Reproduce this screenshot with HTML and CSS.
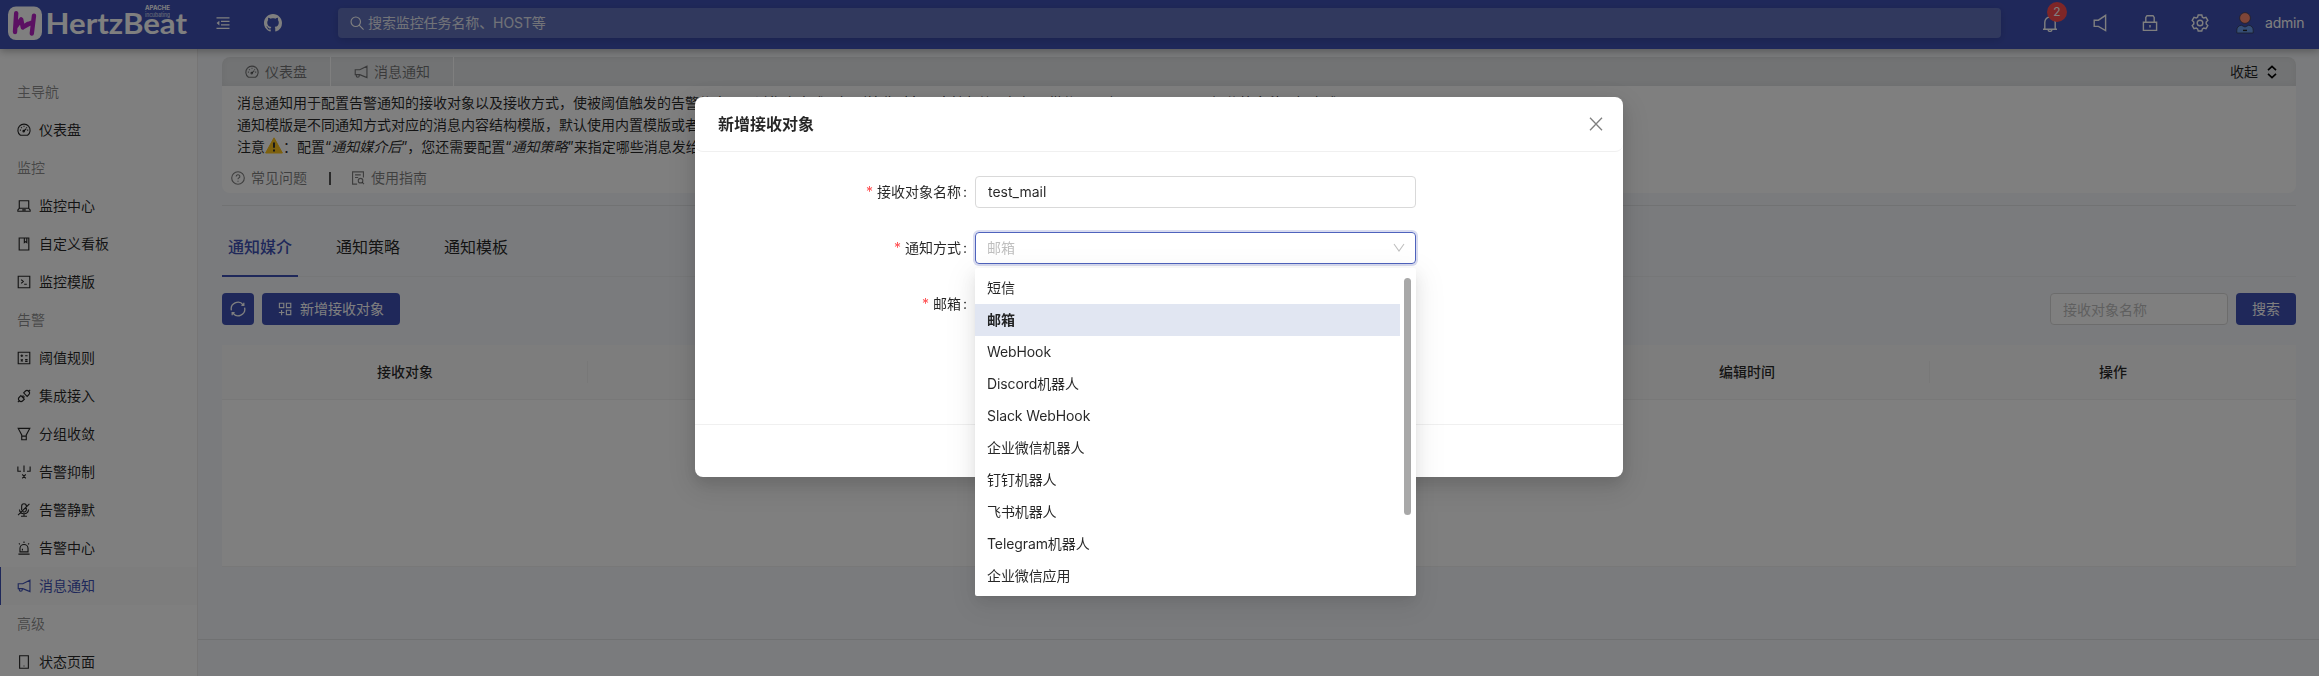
FILE: index.html
```html
<!DOCTYPE html>
<html lang="zh-CN">
<head>
    <meta charset="UTF-8">
    <meta name="viewport" content="width=device-width, initial-scale=1.0">
    <title>HertzBeat - 消息通知</title>
    <link rel="stylesheet" href="styles.css">
</head>
<body>
    <!-- shared icons -->
    <svg class="sprite" width="0" height="0">
        <symbol id="i-dashboard" viewBox="0 0 16 16"><path d="M3.9 14h8.2A7 7 0 1 0 3.9 14zM7.6 9.4l3-3M8 3.2v1.2M3.3 8.2h1.2M11.6 8.2h1.2M4.7 4.9l.8.8M11.4 4.9l-.7.7"/><circle cx="7.6" cy="9.3" r=".8"/></symbol>
        <symbol id="i-laptop" viewBox="0 0 16 16"><path d="M2.6 2h10.8v8.6H2.6zM2.6 10.6L1 12.4V14h14v-1.6l-1.6-1.8M6 12.5h4"/></symbol>
        <symbol id="i-book" viewBox="0 0 16 16"><path d="M2.5 1.2h11v13.6h-11zM8.4 1.4v5l1.4-1.1 1.4 1.1v-5"/></symbol>
        <symbol id="i-code" viewBox="0 0 16 16"><path d="M1.4 1.4h13.2v13.2H1.4zM4.8 5.2l2.4 2.2-2.4 2.2M8.2 10.6h3"/></symbol>
        <symbol id="i-calc" viewBox="0 0 16 16"><path d="M1.4 1.4h13.2v13.2H1.4zM4 5.4h3M5.5 3.9v3M9.3 5.4h2.8M4.4 9.5l2.2 2.4M6.6 9.5l-2.2 2.4M9.3 9.8h2.8M9.3 11.8h2.8"/></symbol>
        <symbol id="i-api" viewBox="0 0 16 16"><path d="M1 15l2.2-2.2M12.8 3.2L15 1M7.6 4.4l1.8-1.8a2.8 2.8 0 0 1 4 4l-1.8 1.8zM4.4 7.6L2.6 9.4a2.8 2.8 0 0 0 4 4l1.8-1.8zM5.8 9l1.6-1.6M7 10.2l1.6-1.6"/></symbol>
        <symbol id="i-funnel" viewBox="0 0 16 16"><path d="M1.4 1.6h13.2l-4 7.4v5.6H5.4V9zM5.4 10.4h5.2"/></symbol>
        <symbol id="i-inhibit" viewBox="0 0 16 16"><path d="M1 1.6v5.6h3.6M8 .6v7.4M15 1.6v5.6h-3.6M6 10.8l4 4.4M10 10.8l-4 4.4"/></symbol>
        <symbol id="i-mute" viewBox="0 0 16 16"><path d="M5.3 8.4V3.6a2.7 2.7 0 0 1 5.4 0v4a2.7 2.7 0 0 1-4.2 2.2M2.8 7.5A5.2 5.2 0 0 0 8 12.3a5.2 5.2 0 0 0 5.2-4.8M8 12.3v2.6M4.6 15.1h6.8M14.2 1L1.2 13.8"/></symbol>
        <symbol id="i-alert" viewBox="0 0 16 16"><path d="M3.4 12.4V8.6a4.6 4.6 0 0 1 9.2 0v3.8zM1.6 15h12.8M8 .6v1.8M2.2 2.8l1.1 1.1M13.8 2.8l-1.1 1.1M6.2 10.8V8.8"/></symbol>
        <symbol id="i-notify" viewBox="0 0 16 16"><path d="M14.8 1.4v13L6.6 11H1.4V5.4h5.2zM2.6 11.2v1a1.7 1.7 0 0 0 3.4 0v-1"/></symbol>
        <symbol id="i-mobile" viewBox="0 0 16 16"><path d="M3 .8h10v14.4H3zM7.5 12.6h1"/></symbol>
        <symbol id="i-question" viewBox="0 0 16 16"><circle cx="8" cy="8" r="7.2"/><path d="M5.9 6.3a2.1 2 0 1 1 2.9 1.8c-.6.3-.8.6-.8 1.4M8 11v1.2"/></symbol>
        <symbol id="i-guide" viewBox="0 0 16 16"><path d="M7 15H1.8V1h12.4v6.4M4.6 4.4h6.6M4.6 7.4h3.6M13 13l1.8 2"/><circle cx="10.9" cy="11" r="2.6"/></symbol>
        <symbol id="i-sync" viewBox="0 0 16 16"><path d="M1.4 9.4A6.7 6.7 0 0 1 13.2 3.8M14.6 6.6A6.7 6.7 0 0 1 2.8 12.2M13.8 1.8v2.6h-2.4M2.2 14.2v-2.6h2.4"/></symbol>
        <symbol id="i-appadd" viewBox="0 0 16 16"><path d="M1.6 1.4h5v5h-5zM9.6 1.4h5v5h-5zM9.6 9.4h5v5h-5zM1 12h6.2M4.1 9v6"/></symbol>
        <symbol id="i-search" viewBox="0 0 16 16"><circle cx="6.6" cy="6.6" r="5.4"/><path d="M10.5 10.5l5 5"/></symbol>
    </svg>

    <header class="header">
        <a class="logo" href="#">
            <svg width="190" height="49" viewBox="0 0 190 49">
                <rect x="8" y="6.5" width="34" height="33.5" rx="8" fill="#fff"/>
                <path d="M16.2 13.2L15 32M15.6 27l5.6-7.6 1.6 8 10-5.6M34 15.6L31.8 33.6M22.8 27.4l5.2-3.6" fill="none" stroke="#b621c4" stroke-width="4.4" stroke-linecap="round" stroke-linejoin="round"/>
                <text class="logo-name" x="45.5" y="34.4" textLength="141.5" lengthAdjust="spacingAndGlyphs">HertzBeat</text>
                <text class="logo-tag" x="145" y="9.8" textLength="25" lengthAdjust="spacingAndGlyphs">APACHE</text>
                <text class="logo-sub" x="145" y="16.8" textLength="25" lengthAdjust="spacingAndGlyphs">incubating</text>
            </svg>
        </a>
        <svg class="fold" width="14" height="14" viewBox="0 0 14 14"><path d="M.5 1.8h13M5 5.3h8.5M5 8.8h8.5M.5 12.4h13" fill="none" stroke="#fff" stroke-width="1.3"/><path d="M3.4 4.8v4.6L.6 7.1z" fill="#fff"/></svg>
        <svg class="github" width="18" height="18" viewBox="0 0 16 16"><path fill="#fff" d="M8 0C3.58 0 0 3.58 0 8c0 3.54 2.29 6.53 5.47 7.59.4.07.55-.17.55-.38 0-.19-.01-.82-.01-1.49-2.01.37-2.53-.49-2.69-.94-.09-.23-.48-.94-.82-1.13-.28-.15-.68-.52-.01-.53.63-.01 1.08.58 1.23.82.72 1.21 1.87.87 2.33.66.07-.52.28-.87.51-1.07-1.78-.2-3.64-.89-3.64-3.95 0-.87.31-1.59.82-2.15-.08-.2-.36-1.02.08-2.12 0 0 .67-.21 2.2.82.64-.18 1.32-.27 2-.27s1.36.09 2 .27c1.53-1.04 2.2-.82 2.2-.82.44 1.1.16 1.92.08 2.12.51.56.82 1.27.82 2.15 0 3.07-1.87 3.75-3.65 3.95.29.25.54.73.54 1.48 0 1.07-.01 1.93-.01 2.2 0 .21.15.46.55.38A8.01 8.01 0 0 0 16 8c0-4.42-3.58-8-8-8z"/></svg>
        <div class="header-search">
            <svg class="icon"><use href="#i-search"/></svg>
            <span>搜索监控任务名称、HOST等</span>
        </div>
        <div class="header-tools">
            <span class="tool bell">
                <svg width="18" height="18" viewBox="0 0 18 18"><path d="M2 15.2h14M3.8 15V8.2a5.2 5.2 0 0 1 10.4 0V15M9 1.2V3M7.2 16a1.8 1.4 0 0 0 3.6 0"/></svg>
                <span class="badge">2</span>
            </span>
            <span class="tool"><svg width="18" height="18" viewBox="0 0 18 18"><path d="M14.6 1.4v15.2L7.4 12.4H3.2V6.2h4.2z"/></svg></span>
            <span class="tool"><svg width="18" height="18" viewBox="0 0 18 18"><path d="M2.4 8.2h13.2v8.2H2.4zM4.8 8V3.4L6 1.7h6l1.2 1.7V8M9 11v2.4"/></svg></span>
            <span class="tool"><svg width="18" height="18" viewBox="0 0 18 18"><path d="M7.2 1h3.6l.6 2.2 1.4.8 2.2-.6L16.8 6.4 15.2 8v2l1.6 1.6-1.8 3.1-2.2-.6-1.4.8-.6 2.1H7.2l-.6-2.1-1.4-.8-2.2.6-1.8-3.1L2.8 10V8L1.2 6.4 3 3.4l2.2.6 1.4-.8z"/><circle cx="9" cy="9" r="2.8"/></svg></span>
            <span class="user">
                <svg class="avatar" width="18" height="22" viewBox="0 0 18 22"><circle cx="9" cy="6" r="5.4" fill="#ff8a70" stroke="#3c3c50" stroke-width=".8"/><path d="M.8 21v-2.6a5.4 5.4 0 0 1 4.4-5.2L9 15l3.8-1.8a5.4 5.4 0 0 1 4.4 5.2V21z" fill="#6a9cec" stroke="#333a52" stroke-width=".8"/><path d="M7 18.4h4" stroke="#222" stroke-width="1.4"/></svg>
                <span>admin</span>
            </span>
        </div>
    </header>

    <div class="layout">
        <nav class="sidebar">
            <div class="group">主导航</div>
            <a class="item"><svg class="icon"><use href="#i-dashboard"/></svg>仪表盘</a>
            <div class="group">监控</div>
            <a class="item"><svg class="icon"><use href="#i-laptop"/></svg>监控中心</a>
            <a class="item"><svg class="icon"><use href="#i-book"/></svg>自定义看板</a>
            <a class="item"><svg class="icon"><use href="#i-code"/></svg>监控模版</a>
            <div class="group">告警</div>
            <a class="item"><svg class="icon"><use href="#i-calc"/></svg>阈值规则</a>
            <a class="item"><svg class="icon"><use href="#i-api"/></svg>集成接入</a>
            <a class="item"><svg class="icon"><use href="#i-funnel"/></svg>分组收敛</a>
            <a class="item"><svg class="icon"><use href="#i-inhibit"/></svg>告警抑制</a>
            <a class="item"><svg class="icon"><use href="#i-mute"/></svg>告警静默</a>
            <a class="item"><svg class="icon"><use href="#i-alert"/></svg>告警中心</a>
            <a class="item active"><svg class="icon"><use href="#i-notify"/></svg>消息通知</a>
            <div class="group">高级</div>
            <a class="item"><svg class="icon"><use href="#i-mobile"/></svg>状态页面</a>
        </nav>

        <main class="content">
            <div class="page">
                <section class="help">
                    <div class="help-bar">
                        <a class="crumb"><svg class="icon"><use href="#i-dashboard"/></svg>仪表盘</a>
                        <a class="crumb"><svg class="icon"><use href="#i-notify"/></svg>消息通知</a>
                        <span class="collapse">收起
                            <svg width="10" height="14" viewBox="0 0 10 14"><path d="M1 5.2L5 1.4l4 3.8M1 8.8l4 3.8 4-3.8" fill="none" stroke="#000" stroke-width="1.6"/></svg>
                        </span>
                    </div>
                    <div class="help-text">
                        <p>消息通知用于配置告警通知的接收对象以及接收方式，使被阈值触发的告警信息，通过指定方式通知到接收对象。支持邮箱、钉钉、微信、飞书、WebHook，短信等多种通知方式。</p>
                        <p>通知模版是不同通知方式对应的消息内容结构模版，默认使用内置模版或者自定义模版。</p>
                        <p>注意<svg class="warn" width="18" height="17" viewBox="0 0 18 17"><path d="M9 .8L17.4 16H.6z" fill="#fcc21b" stroke="#fcc21b" stroke-linejoin="round"/><path d="M9 5.4v5.4M9 12.4v2" stroke="#333" stroke-width="2"/></svg>：配置“<i>通知媒介后</i>”，您还需要配置“<i>通知策略</i>”来指定哪些消息发给哪些接收对象。</p>
                    </div>
                    <div class="help-links">
                        <a><svg class="icon"><use href="#i-question"/></svg>常见问题</a>
                        <span class="sep"></span>
                        <a><svg class="icon"><use href="#i-guide"/></svg>使用指南</a>
                    </div>
                </section>

                <div class="divider"></div>

                <div class="tabs">
                    <a class="tab active">通知媒介</a>
                    <a class="tab">通知策略</a>
                    <a class="tab">通知模板</a>
                </div>

                <div class="toolbar">
                    <button class="btn refresh"><svg class="icon"><use href="#i-sync"/></svg></button>
                    <button class="btn"><svg class="icon"><use href="#i-appadd"/></svg>新增接收对象</button>
                    <input class="input filter" type="text" placeholder="接收对象名称">
                    <button class="btn search">搜索</button>
                </div>

                <table class="table">
                    <thead>
                        <tr>
                            <th class="col">接收对象</th>
                            <th></th>
                            <th class="col">编辑时间</th>
                            <th class="col">操作</th>
                        </tr>
                    </thead>
                    <tbody>
                        <tr><td colspan="4"></td></tr>
                    </tbody>
                </table>
            </div>
            <footer class="footer"></footer>
        </main>
    </div>

    <div class="mask">
        <div class="modal">
            <div class="modal-header">
                <span>新增接收对象</span>
                <svg width="14" height="14" viewBox="0 0 14 14"><path d="M1 .8l12 12.4M13 .8L1 13.2" fill="none" stroke="#7f7f7f" stroke-width="1.3"/></svg>
            </div>
            <div class="modal-body">
                <div class="row">
                    <label class="label">接收对象名称</label>
                    <input class="input" type="text" value="test_mail">
                </div>
                <div class="row">
                    <label class="label">通知方式</label>
                    <div class="select">
                        <span>邮箱</span>
                        <svg width="12" height="12" viewBox="0 0 12 12"><path d="M1 2l5 7 5-7" fill="none" stroke="#bfbfbf" stroke-width="1.1"/></svg>
                        <div class="dropdown">
                            <div class="option">短信</div>
                            <div class="option selected">邮箱</div>
                            <div class="option">WebHook</div>
                            <div class="option">Discord机器人</div>
                            <div class="option">Slack WebHook</div>
                            <div class="option">企业微信机器人</div>
                            <div class="option">钉钉机器人</div>
                            <div class="option">飞书机器人</div>
                            <div class="option">Telegram机器人</div>
                            <div class="option">企业微信应用</div>
                            <span class="thumb"></span>
                        </div>
                    </div>
                </div>
                <div class="row">
                    <label class="label">邮箱</label>
                </div>
            </div>
            <div class="modal-footer"></div>
        </div>
    </div>
</body>
</html>
```
FILE: styles.css
```css
* { box-sizing: border-box; }
body { margin: 0; height: 676px; overflow: hidden; background: #f5f7fa; color: rgba(0, 0, 0, 0.85); font: 14px/22px Inter, "Noto Sans CJK SC", sans-serif; }
p { margin: 0; }
input, button { font: inherit; }
.sprite { display: block; }
.icon { width: 14px; height: 14px; flex: none; fill: none; stroke: currentColor; stroke-width: 1.3; }

/* header */
.header { position: relative; z-index: 2; display: flex; align-items: center; width: 2320px; height: 49px; background: #3f51b5; color: #fff; box-shadow: 0 2px 8px rgba(0, 0, 0, 0.3); }
.logo { display: block; width: 217px; height: 49px; }
.logo text { fill: #fff; }
.logo-name { font: 700 29px "Lato", sans-serif; }
.logo-tag { font: 700 6px Inter, sans-serif; }
.logo-sub { font: 500 5.5px Inter, sans-serif; opacity: 0.7; }
.fold { margin: -3px 34px 0 -1px; }
.github { margin-top: -3px; }
.header-search { display: flex; align-items: center; gap: 4px; width: 1663px; height: 30px; margin: -3px 0 0 56px; padding: 0 12px; border-radius: 4px; background: #6373bd; box-shadow: 0 2px 8px rgba(0, 0, 0, 0.15); }
.header-search span { color: #e4e6f0; letter-spacing: -0.1px; }
.header-tools { display: flex; align-items: center; margin: -3px 0 0 24px; }
.tool { position: relative; display: flex; justify-content: center; width: 50px; }
.tool svg { fill: none; stroke: #fff; stroke-width: 1.4; }
.badge { position: absolute; left: 22px; top: -12px; width: 20px; height: 20px; border-radius: 10px; background: #ff4d4f; font-size: 12px; line-height: 20px; text-align: center; }
.user { display: flex; align-items: center; gap: 11px; margin-left: 11px; letter-spacing: -0.2px; }

/* sidebar */
.layout { display: flex; width: 2320px; height: 627px; }
.sidebar { width: 198px; padding-top: 24px; background: #fff; border-right: 1px solid #eceaea; }
.group { height: 38px; padding-left: 17px; line-height: 38px; color: rgba(0, 0, 0, 0.45); }
.item { display: flex; align-items: center; gap: 8px; height: 38px; padding-left: 17px; }
.item.active { padding-left: 16px; border-left: 1px solid #3f51b5; background: #fafafa; color: #3f51b5; }

/* page */
.content { flex: 1; }
.page { height: 590px; padding: 8px 24px 0; }
.footer { border-top: 1px solid #e0e2e5; }
.help { height: 136px; border-radius: 8px; background: #fff; overflow: hidden; }
.help-bar { display: flex; height: 29px; background: #e5e7e9; color: rgba(0, 0, 0, 0.5); box-shadow: inset 0 0 8px rgba(0, 0, 0, 0.06); }
.crumb { display: flex; align-items: center; gap: 6px; padding: 0 23px; border-right: 1px solid #fff; }
.collapse { display: flex; align-items: center; gap: 9px; margin-left: auto; padding-right: 19px; color: rgba(0, 0, 0, 0.85); }
.help-text { padding: 6px 0 0 15px; white-space: nowrap; }
.warn { vertical-align: -2px; }
.help-links { display: flex; align-items: center; margin: 9px 0 0 9px; color: rgba(0, 0, 0, 0.5); }
.help-links a { display: flex; align-items: center; gap: 6px; }
.sep { width: 2px; height: 13px; margin: 0 20px 0 22px; background: #555; }
.divider { height: 1px; margin-top: 12px; background: #e2e4e7; }
.tabs { display: flex; gap: 32px; height: 71px; border-bottom: 1px solid #eceef0; }
.tab { height: 71px; padding: 30px 6px 0; font-size: 16px; }
.tab.active { border-bottom: 2px solid #3f51b5; color: #3f51b5; font-weight: 500; }
.toolbar { display: flex; gap: 8px; margin-top: 16px; }
.btn { display: flex; align-items: center; gap: 8px; height: 32px; padding: 0 16px; border: none; border-radius: 4px; background: #3f51b5; color: #fff; }
.btn.refresh { padding: 0 8px; }
.btn.refresh .icon { width: 16px; height: 16px; }
.input { width: 441px; height: 32px; padding: 0 11px 0 12px; border: 1px solid #d9d9d9; border-radius: 4px; background: #fff; color: rgba(0, 0, 0, 0.85); }
.input::placeholder { color: #bfbfbf; }
.filter { width: 178px; margin-left: auto; }

.table { width: 100%; margin-top: 20px; table-layout: fixed; border-collapse: separate; border-spacing: 0; }
.table th { height: 55px; padding: 0; border-bottom: 1px solid #f0f0f0; background: linear-gradient(#f0f0f0, #f0f0f0) right center / 1px 22px no-repeat #fafafa; font-weight: 500; }
.table th:last-child { background: #fafafa; }
.table td { height: 167px; background: #fff; border-bottom: 1px solid #f0f0f0; }
.col { width: 366px; }

/* modal */
.mask { position: fixed; inset: 0; z-index: 10; background: rgba(0, 0, 0, 0.5); padding: 97px 0 0 695px; }
.modal { display: flex; flex-direction: column; width: 928px; height: 380px; border-radius: 8px; background: #fff; box-shadow: 0 6px 16px rgba(0, 0, 0, 0.12), 0 9px 28px 8px rgba(0, 0, 0, 0.08); }
.modal-header { display: flex; align-items: center; justify-content: space-between; height: 55px; padding: 0 20px 0 23px; border-bottom: 1px solid #f0f0f0; border-radius: 8px; font-size: 16px; font-weight: 600; }
.modal-body { flex: 1; padding-top: 24px; }
.modal-footer { height: 53px; border-top: 1px solid #f0f0f0; }
.row { display: flex; height: 32px; margin-bottom: 24px; line-height: 32px; }
.label { width: 280px; padding-right: 8px; text-align: right; }
.label::before { content: "*"; margin-right: 4px; color: #ff4d4f; }
.label::after { content: ":"; margin-left: 2px; }
.select { position: relative; display: flex; align-items: center; justify-content: space-between; width: 441px; height: 32px; padding: 0 10px 0 11px; border: 1px solid #4f63bd; border-radius: 4px; box-shadow: 0 0 0 2px rgba(63, 81, 181, 0.2); color: #bfbfbf; }
.dropdown { position: absolute; left: -1px; top: 35px; width: 441px; height: 328px; padding: 4px 0; border-radius: 2px; background: #fff; color: rgba(0, 0, 0, 0.85); box-shadow: 0 3px 6px -4px rgba(0, 0, 0, 0.12), 0 6px 16px rgba(0, 0, 0, 0.08), 0 9px 28px 8px rgba(0, 0, 0, 0.05); }
.option { width: 425px; height: 32px; padding-left: 12px; line-height: 32px; letter-spacing: -0.1px; }
.option.selected { background: #e1e6f2; font-weight: 600; }
.thumb { position: absolute; right: 5px; top: 10px; width: 7px; height: 237px; border-radius: 4px; background: #a8a8a8; }
```
